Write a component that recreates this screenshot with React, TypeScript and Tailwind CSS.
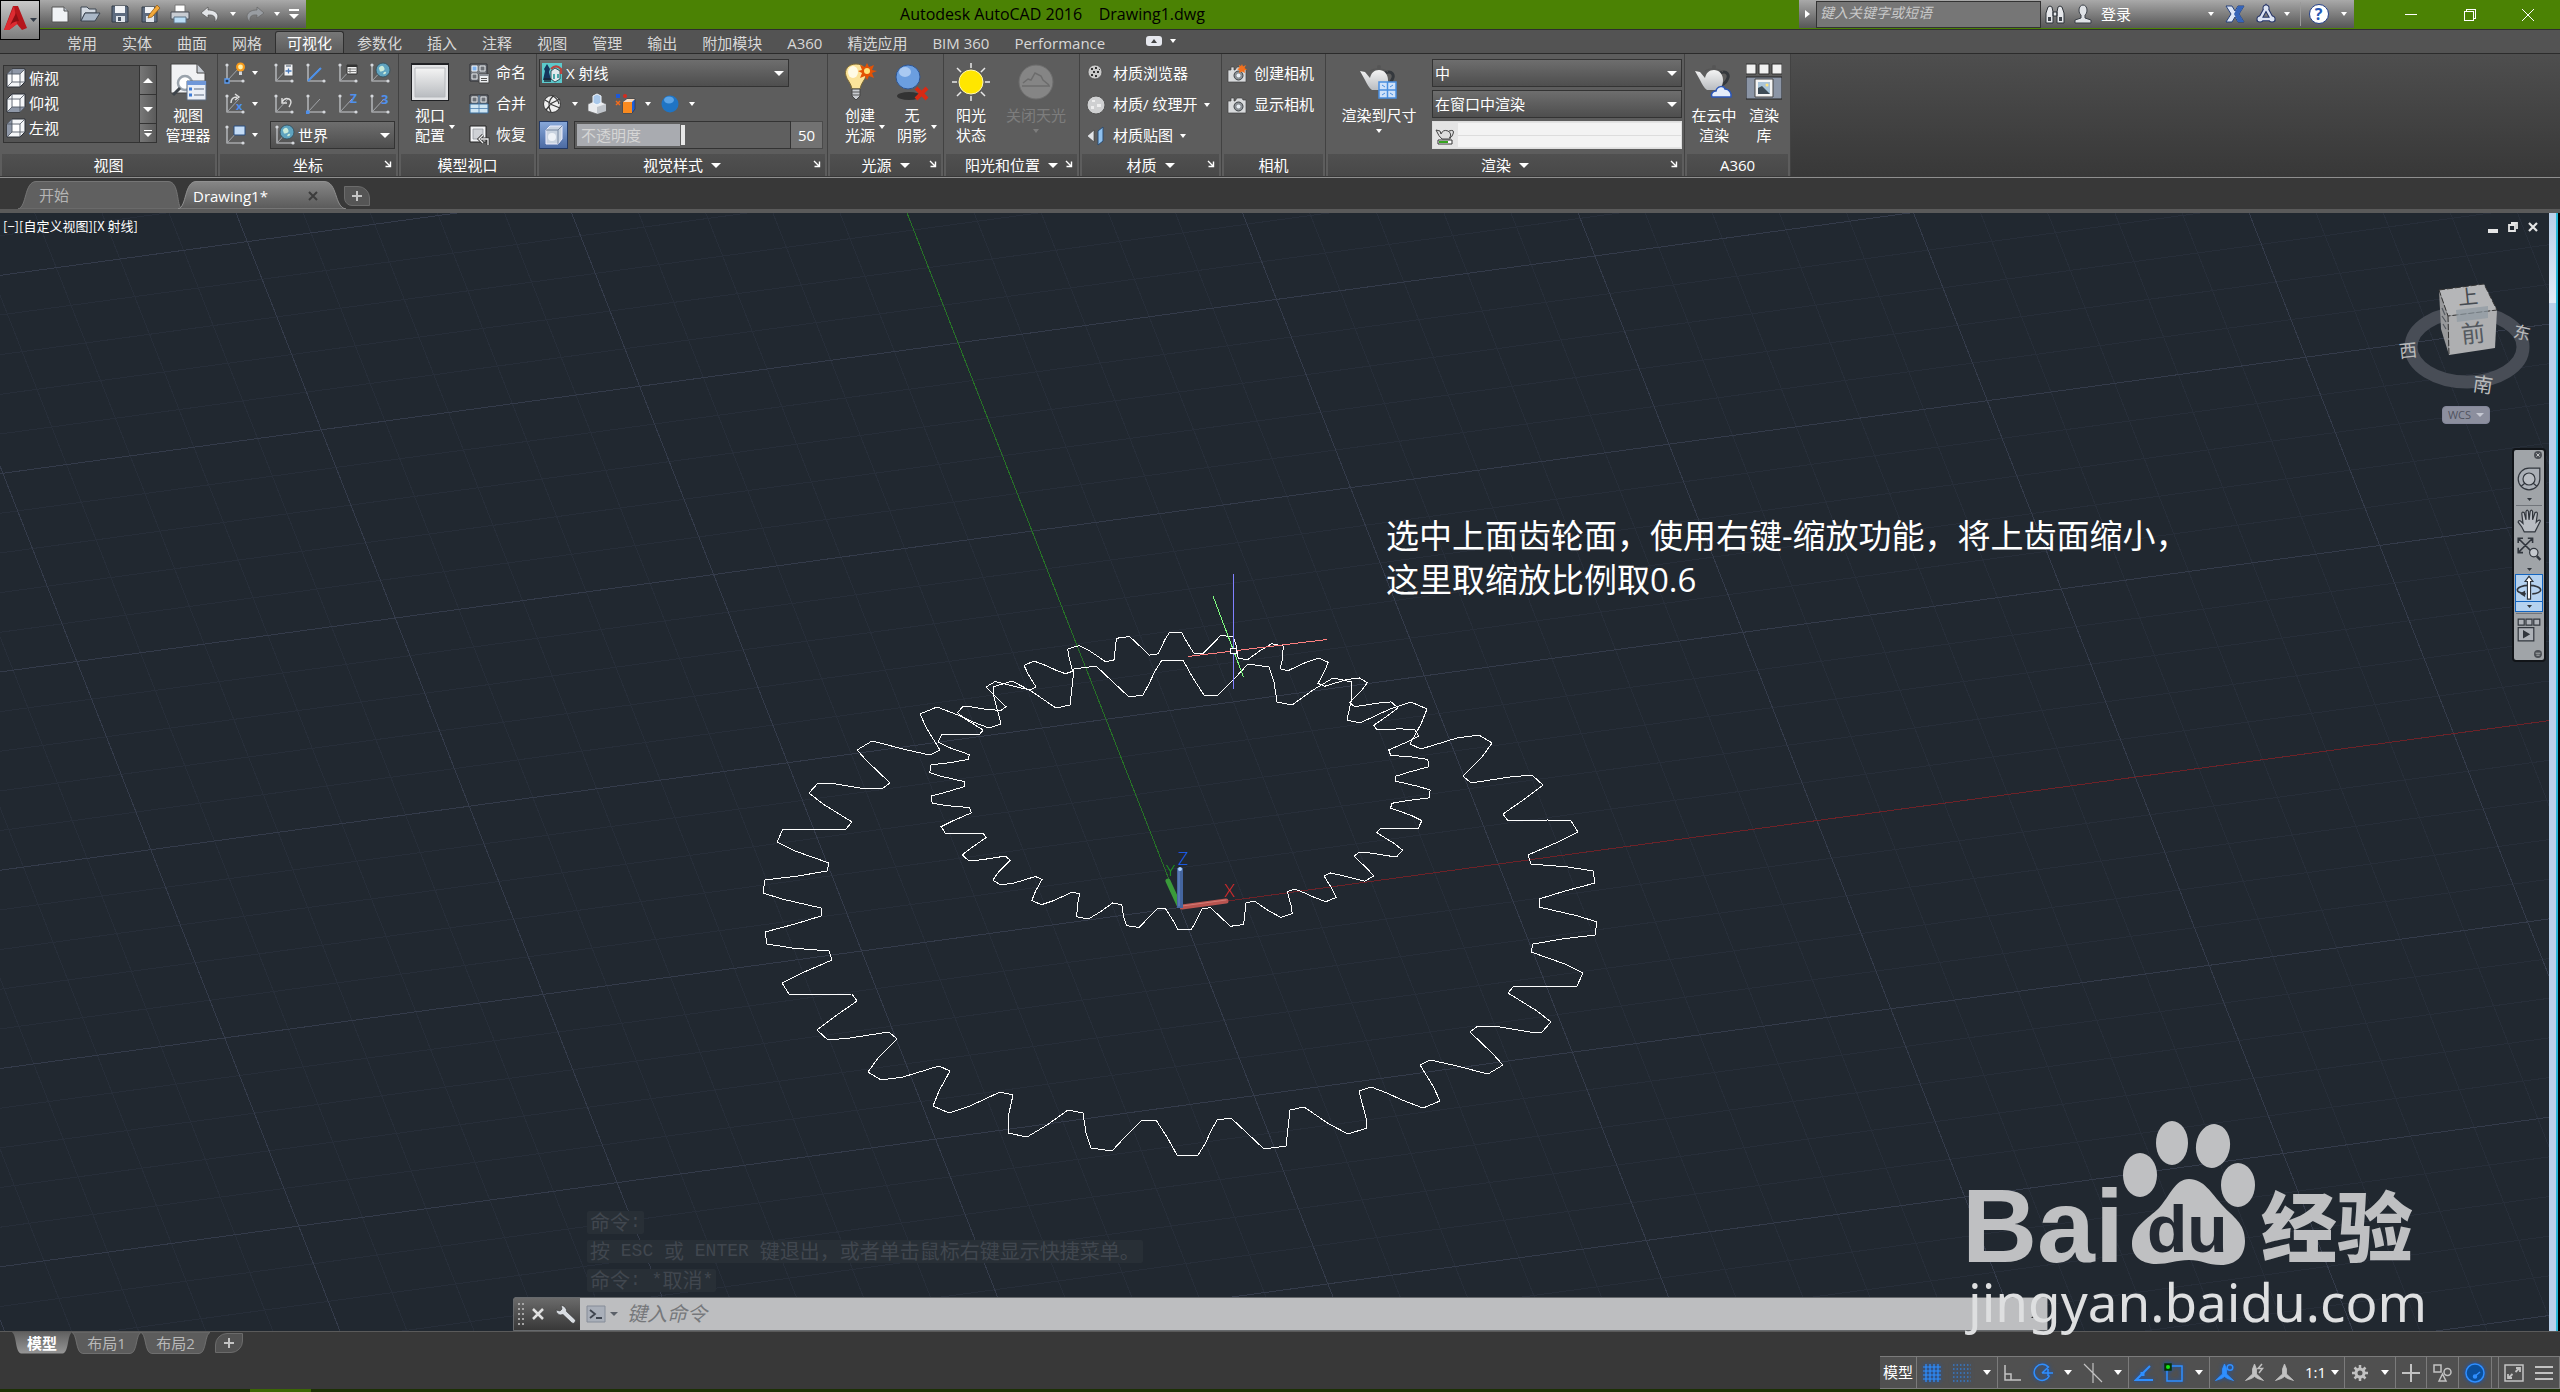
import { useState, type ReactNode } from 'react';
import { clsx } from 'clsx';

/* ---------- small building blocks ---------- */

function Icon({ children, className = 'h-5 w-5' }: { children: ReactNode; className?: string }) {
  return (
    <svg viewBox="0 0 20 20" className={clsx('shrink-0 overflow-visible', className)} aria-hidden="true">
      {children}
    </svg>
  );
}

function Caret({ className = 'h-1 w-2' }: { className?: string }) {
  return (
    <svg viewBox="0 0 8 4" preserveAspectRatio="none" className={clsx('shrink-0 fill-current', className)} aria-hidden="true">
      <path d="M0 0h8L4 4z" />
    </svg>
  );
}

function Launcher() {
  return (
    <button aria-label="more" className="absolute right-1 top-[6px] h-2 w-2 text-white">
      <svg viewBox="0 0 8 8" className="h-2 w-2" aria-hidden="true">
        <path d="M1 1l5 5M6.500 1.500v5h-5" fill="none" stroke="currentColor" strokeWidth="1.400" />
      </svg>
    </button>
  );
}

interface PanelProps {
  title: string;
  menu?: boolean;
  launcher?: boolean;
  className: string;
  children: ReactNode;
}

function Panel({ title, menu, launcher, className, children }: PanelProps) {
  return (
    <section className={clsx('flex shrink-0 flex-col border-r border-[#424242] bg-[#5d5d5d]', className)}>
      <div className="flex h-[100px]">{children}</div>
      <div className="relative mx-[2px] flex h-[22px] items-center justify-center gap-2 bg-linear-to-b from-[#505050] to-[#484848] leading-5">
        {title}
        {menu && <Caret className="h-[5px] w-[10px]" />}
        {launcher && <Launcher />}
      </div>
    </section>
  );
}

interface BigButtonProps {
  lines: string[];
  icon: ReactNode;
  arrow?: 'side' | 'below';
  disabled?: boolean;
  className?: string;
}

function BigButton({ lines, icon, arrow, disabled, className }: BigButtonProps) {
  return (
    <button
      disabled={disabled}
      className={clsx('flex shrink-0 flex-col items-center pt-2', disabled && 'text-[#7d7d7d]', className)}
    >
      <span className="flex h-10 items-center">{icon}</span>
      <span className="relative mt-[3px] block whitespace-nowrap text-center leading-5">
        {lines.map((l) => (
          <span key={l} className="block">{l}</span>
        ))}
        {arrow === 'side' && <Caret className="absolute left-full top-5 ml-1 h-1 w-[6px]" />}
      </span>
      {arrow === 'below' && <Caret className="mt-1 h-1 w-[6px]" />}
    </button>
  );
}

function Combo({ label, options, className, inner, children }: {
  label: string;
  options: string[];
  className: string;
  inner: string;
  children?: ReactNode;
}) {
  return (
    <div className={clsx('relative flex h-7 items-center border border-[#333] bg-linear-to-b from-[#6e6e6e] to-[#4e4e4e]', className)}>
      {children}
      <select aria-label={label} className={clsx('h-full w-full appearance-none bg-transparent text-white outline-none', inner)}>
        {options.map((o) => (
          <option key={o}>{o}</option>
        ))}
      </select>
      <Caret className="pointer-events-none absolute right-1 top-[11px] h-[5px] w-[10px]" />
    </div>
  );
}

/* ---------- icons ---------- */

const Cube = ({ face }: { face: 'top' | 'bottom' | 'left' }) => (
  <Icon>
    <path d="M1 6l5-5h13v13l-5 5H1z" fill="#f4f6f8" stroke="#2b2f36" />
    {face === 'top' && <path d="M1 6l5-5h13l-5 5z" fill="#8f98a8" />}
    {face === 'bottom' && <path d="M1 19l5-5h13l-5 5z" fill="#8f98a8" />}
    {face === 'left' && <path d="M1 6l5-5v13l-5 5z" fill="#8f98a8" />}
    <path d="M1 6h13v13M14 6l5-5M6 1v13h13M6 14l-5 5" fill="none" stroke="#4a505a" strokeWidth=".8" />
    <path d="M7 7h6v6H7z" fill="#fff" />
  </Icon>
);

const Axes = ({ children }: { children?: ReactNode }) => (
  <Icon>
    <path d="M2 2v16h16" fill="none" stroke="#c9ccd0" strokeWidth="1.200" />
    <path d="M2 18L14 5" fill="none" stroke="#a3a6aa" />
    <circle cx="2" cy="2" r="1.600" fill="#d5d8dc" />
    <circle cx="18" cy="18" r="1.600" fill="#d5d8dc" />
    {children}
  </Icon>
);

const Globe = ({ x, y, r }: { x: number; y: number; r: number }) => (
  <g>
    <circle cx={x} cy={y} r={r} fill="#5fa3bf" stroke="#2f4a58" strokeWidth=".8" />
    <path d={`M${x - r * 0.6} ${y - 2}q3-4 5-1t-1 4-3 0zM${x + 1} ${y + 2}q3-1 2 1t-3 1z`} fill="#c9ead9" />
  </g>
);

const Teapot = ({ children }: { children: ReactNode }) => (
  <svg viewBox="0 0 40 34" className="h-[34px] w-10" aria-hidden="true">
    <path d="M26 8c7-3 10 2 7 7-2 4-5 5-8 5" fill="none" stroke="#34383d" strokeWidth="3" />
    <path d="M1 6l5 1 5 6c1-5 4-8 9-8s9 4 9 10c0 5-2 9-5 10H13c-3-2-5-6-7-10z" fill="url(#metal)" />
    <path d="M11 6c4-3 14-3 18 1" fill="none" stroke="#555" />
    <circle cx="20" cy="2" r="2" fill="#555" />
    {children}
  </svg>
);

const Camera = ({ spark }: { spark?: boolean }) => (
  <Icon>
    <path d="M1 6h3V3h3v3h1l2-3h5l1 2h3v13H1z" fill="#d9dbdd" stroke="#444" strokeWidth=".7" />
    <circle cx="11.500" cy="11.500" r="4.500" fill="#8c9196" stroke="#3f4347" />
    <circle cx="11.500" cy="11.500" r="2" fill="#e8eef4" />
    {spark && <path d="M15 0l1 2.500L19 1l-1.500 3L20 5.500l-2.500 1L18 9l-3-1.500L12 9l.5-2.500L10 5l2.500-1L12 1l2 1z" fill="#f2701d" />}
  </Icon>
);

const viewportIcons = [
  <Icon key="a">
    <path d="M1 1h17v17H1z" fill="#767a80" stroke="#2e3136" />
    <path d="M3 3h5v5H3z" fill="#7fb2ee" stroke="#f1f3f5" />
    <path d="M11 3h5v5h-5zM3 11h5v5H3z" fill="#6b6f75" stroke="#e3e6e9" />
    <path d="M10 11h10v9H10z" fill="#eceef0" stroke="#444" />
    <path d="M10 11h10v2H10z" fill="#8b9097" />
    <path d="M12 15.500h6M12 17.500h6" stroke="#555" />
  </Icon>,
  <Icon key="b">
    <path d="M1 1h18v9H1z" fill="#767a80" stroke="#2e3136" />
    <path d="M3 3h5v5H3zM12 3h5v5h-5z" fill="#6b6f75" stroke="#e3e6e9" />
    <path d="M1 10h18v9H1z" fill="#cfe6f4" stroke="#3b6f9c" />
    <path d="M10 1v18M1 14.500h18" stroke="#4b7fae" strokeWidth=".8" />
  </Icon>,
  <Icon key="c">
    <path d="M1 1h16v16H1z" fill="#f3f4f6" stroke="#222" />
    <path d="M4 4h10v10H4z" fill="#cfd2d6" stroke="#8b8f95" strokeWidth=".7" />
    <path d="M19 20v-6h-7M14 10l-4 4 4 4" fill="none" stroke="#333" strokeWidth="3" />
    <path d="M19 20v-6h-7M14 10l-4 4 4 4" fill="none" stroke="#eee" strokeWidth="1.300" />
  </Icon>,
];

/* ---------- title bar ---------- */

const quickAccess: [string, ReactNode][] = [
  ['新建', <Icon key="i"><path d="M2 3h12l4 4v11H2z" fill="#f0f2f5" stroke="#555" /><path d="M14 3v4h4" fill="#bcc3cc" stroke="#555" /></Icon>],
  ['打开', <Icon key="i"><path d="M1 3h6l2 2h7v4H5L1 17z" fill="#d4dae2" stroke="#3d4652" /><path d="M5 9h15l-5 8H1z" fill="#aab7c7" stroke="#3d4652" /></Icon>],
  ['保存', <Icon key="i"><path d="M2 2h15l1 1v15H2z" fill="#5e6c80" stroke="#333c48" /><path d="M5 2h10v7H5z" fill="#f1f3f6" /><path d="M6 12h9v6H6z" fill="#dfe4ea" /><path d="M8 13h3v4H8z" fill="#4a5666" /></Icon>],
  ['另存为', <Icon key="i"><path d="M2 3h13l2 1v14H2z" fill="#5e6c80" stroke="#333c48" /><path d="M5 3h9v6H5z" fill="#f1f3f6" /><path d="M6 12h8v6H6z" fill="#dfe4ea" /><path d="M9 11L17 1l3 3-8 9-4 1z" fill="#f2a93b" stroke="#8a5512" strokeWidth=".7" /></Icon>],
  ['打印', <Icon key="i"><path d="M5 1h10v7H5z" fill="#fff" stroke="#777" /><path d="M1 8h18v7H1z" fill="#c8ccd2" stroke="#4a4f57" /><path d="M4 13h12v6H4z" fill="#b9dcf5" stroke="#5d7386" /></Icon>],
  ['放弃', <Icon key="i"><path d="M8 3L1 9l7 5v-3c5-.500 8 1 7 7 6-6 2-12-7-12z" fill="#e3e5e8" stroke="#555" strokeWidth=".7" /></Icon>],
];

function TitleBar() {
  return (
    <header className="relative flex h-[30px] shrink-0 border-b border-[#2e2e2e] bg-[#4b8204]">
      <button aria-label="应用程序菜单" className="absolute left-0 top-0 z-10 flex h-10 w-10 items-center border border-black bg-linear-to-b from-[#c9c9c9] to-[#7c7c7c]">
        <svg viewBox="0 0 38 38" className="h-[38px] w-[38px]" aria-hidden="true">
          <path d="M12 5h5l9 22-5 2-5-6-8 6H3z" fill="#b5161b" />
          <path d="M13 5l3 18-8 6H3z" fill="#dd2b31" />
          <path d="M15 12l3 8c-3 0-6 1-9 4z" fill="#8d0f14" />
          <path d="M29 17h7l-3.500 4z" fill="#333c48" />
        </svg>
      </button>
      <div className="flex h-[28px] w-[306px] shrink-0 items-center bg-linear-to-b from-[#a9a9a9] to-[#575757] pl-[45px] text-white">
        {quickAccess.map(([name, icon]) => (
          <button key={name} aria-label={name} className="flex w-[30px] justify-center">{icon}</button>
        ))}
        <button aria-label="放弃列表" className="flex w-[15px] justify-center"><Caret className="h-1 w-[6px]" /></button>
        <button aria-label="重做" className="flex w-[30px] justify-center">
          <Icon><path d="M12 3l7 6-7 5v-3C7 10.500 4 12 5 18-1 12 3 6 12 6z" fill="#999da2" stroke="#666" strokeWidth=".7" /></Icon>
        </button>
        <button aria-label="重做列表" className="flex w-[14px] justify-center"><Caret className="h-1 w-[6px]" /></button>
        <button aria-label="自定义快速访问工具栏" className="flex w-[20px] flex-col items-center gap-[3px]">
          <span className="h-[2px] w-[10px] bg-white" />
          <Caret className="h-[5px] w-[10px]" />
        </button>
      </div>
      <h1 className="flex-1 whitespace-pre text-center text-[16px] leading-7 text-black">{'Autodesk AutoCAD 2016    Drawing1.dwg'}</h1>
      <div className="flex h-[28px] shrink-0 items-center bg-linear-to-b from-[#a9a9a9] to-[#575757]">
        <button aria-label="展开" className="flex w-[17px] justify-center">
          <svg viewBox="0 0 5 8" className="h-2 w-[5px] fill-white" aria-hidden="true"><path d="M0 0l5 4-5 4z" /></svg>
        </button>
        <input
          aria-label="搜索"
          placeholder="键入关键字或短语"
          className="h-[27px] w-[225px] border border-[#333] bg-[#767676] px-[3px] pb-[3px] text-[14px] italic placeholder-[#c9c9c9] outline-none"
        />
        <button aria-label="搜索" className="flex w-7 justify-center">
          <Icon><path d="M3 3q2-2 4 0l1 5v11H1V9zM17 3q-2-2-4 0l-1 5v11h7V9zM8 8h4v4H8z" fill="#e6e8eb" stroke="#2f343a" /><path d="M3 13h3v4H3zM14 13h3v4h-3z" fill="#3f444b" /></Icon>
        </button>
        <button className="flex w-[149px] items-center gap-2 px-1">
          <Icon><path d="M6 6a4 5 0 118 0c0 3-1 4-2 5v3l6 2v3H2v-3l6-2v-3C7 10 6 9 6 6z" fill="#dfe2e6" stroke="#3a3f46" /></Icon>
          登录
          <Caret className="ml-auto h-1 w-[6px]" />
        </button>
        <button aria-label="Exchange" className="flex w-[34px] justify-center">
          <Icon><path d="M1 2h6l3 5 3-5h6l-5 8 5 8h-6l-3-5-3 5H1l5-8z" fill="#dce6f7" stroke="#28427c" /><path d="M13 2h6l-5 8 5 8h-6l-4-8z" fill="#3564b8" /></Icon>
        </button>
        <button aria-label="保持连接" className="mr-[6px] flex w-[42px] items-center justify-center gap-2">
          <Icon><path d="M10 4L4 15h12z" fill="none" stroke="#26366a" strokeWidth="4.500" /><circle cx="10" cy="4" r="3.500" fill="#26366a" /><circle cx="4" cy="15" r="3.500" fill="#26366a" /><circle cx="16" cy="15" r="3.500" fill="#26366a" /><path d="M10 4L4 15h12z" fill="none" stroke="#dde4f3" strokeWidth="2.400" /><circle cx="10" cy="4" r="2.500" fill="#dde4f3" /><circle cx="4" cy="15" r="2.500" fill="#dde4f3" /><circle cx="16" cy="15" r="2.500" fill="#dde4f3" /></Icon>
          <Caret className="h-1 w-[6px]" />
        </button>
        <button aria-label="帮助" className="flex h-6 w-[54px] items-center justify-center gap-3 border-l border-[#999]">
          <span className="flex h-5 w-5 items-center justify-center rounded-full border border-[#24418a] bg-white text-[16px] font-bold leading-4 text-[#2557b5]">?</span>
          <Caret className="h-1 w-[6px]" />
        </button>
      </div>
      <div className="flex shrink-0 pl-[27px] pr-[3px]">
        <button aria-label="最小化" className="flex w-[59px] items-center justify-center"><span className="h-px w-3 bg-white" /></button>
        <button aria-label="还原" className="flex w-[59px] items-center justify-center">
          <svg viewBox="0 0 12 12" className="h-3 w-3" shapeRendering="crispEdges" aria-hidden="true">
            <path d="M.5 2.500h9v9h-9zM2.500 2V.5h9v9H10" fill="none" stroke="#fff" />
          </svg>
        </button>
        <button aria-label="关闭" className="flex w-[58px] items-center justify-center">
          <svg viewBox="0 0 12 12" className="h-3 w-3" aria-hidden="true"><path d="M0 0l12 12M12 0L0 12" stroke="#fff" /></svg>
        </button>
      </div>
    </header>
  );
}

/* ---------- ribbon ---------- */

const ribbonTabs = ['常用', '实体', '曲面', '网格', '可视化', '参数化', '插入', '注释', '视图', '管理', '输出', '附加模块', 'A360', '精选应用', 'BIM 360', 'Performance'];

function RibbonTabs() {
  const [active, setActive] = useState('可视化');
  return (
    <nav className="flex h-6 shrink-0 items-end gap-px border-b border-[#2b2b2b] bg-[#535353] pl-[55px] text-[#d8d8d8]">
      {ribbonTabs.map((tab) => (
        <button
          key={tab}
          onClick={() => setActive(tab)}
          className={clsx(
            'h-[22px] whitespace-nowrap border-x border-t px-[11px] leading-[18px]',
            tab === active
              ? 'rounded-t-[3px] border-[#2f2f2f] bg-linear-to-b from-[#777] to-[#5d5d5d] text-white'
              : 'border-transparent',
          )}
        >
          {tab}
        </button>
      ))}
      <button aria-label="最小化功能区" className="ml-7 flex h-[22px] items-center gap-2 pb-[2px] text-white">
        <span className="flex h-[10px] w-4 items-center justify-center rounded-[3px] bg-[#e6e8ee] text-[#444]">
          <Caret className="h-1 w-[6px] rotate-180" />
        </span>
        <Caret className="h-1 w-[6px]" />
      </button>
    </nav>
  );
}

function MiniButton({ icon, text, arrow }: { icon: ReactNode; text?: string; arrow?: boolean }) {
  return (
    <button aria-label={text ?? 'tool'} className="flex h-[31px] items-center gap-[7px] whitespace-nowrap">
      {icon}
      {text}
      {arrow && <Caret className="h-1 w-[6px]" />}
    </button>
  );
}

function ViewPanel() {
  return (
    <Panel title="视图" className="w-[218px]">
      <div className="ml-[3px] mt-[11px] flex h-[78px] w-[154px] border border-[#333] bg-[#535353]">
        <div className="flex flex-1 flex-col">
          {([['俯视', 'top'], ['仰视', 'bottom'], ['左视', 'left']] as const).map(([name, face]) => (
            <button key={name} className="flex h-[25px] items-center gap-[3px] px-[2px] pb-[2px] leading-5">
              <Cube face={face} />
              {name}
            </button>
          ))}
        </div>
        <div className="flex w-[17px] flex-col divide-y divide-[#333] border-l border-[#333] bg-linear-to-r from-[#777] to-[#5b5b5b]">
          <button aria-label="上" className="flex flex-1 items-center justify-center"><Caret className="h-[5px] w-[10px] rotate-180" /></button>
          <button aria-label="下" className="flex flex-1 items-center justify-center"><Caret className="h-[5px] w-[10px]" /></button>
          <button aria-label="展开" className="flex h-[18px] flex-col items-center justify-center gap-[2px]">
            <span className="h-px w-2 bg-white" />
            <Caret className="h-1 w-2" />
          </button>
        </div>
      </div>
      <BigButton
        className="ml-1 w-[54px]"
        lines={['视图', '管理器']}
        icon={
          <svg viewBox="0 0 38 38" className="h-[38px] w-[38px]" aria-hidden="true">
            <path d="M2 1h26l8 9v20H2z" fill="#f1f2f4" stroke="#444" />
            <path d="M28 1v9h8" fill="#c6ccd4" stroke="#444" />
            <circle cx="16" cy="20" r="7" fill="#fff" stroke="#9aa3ac" strokeWidth="2.500" />
            <path d="M11 25l-7 7" stroke="#3e444b" strokeWidth="3" />
            <path d="M18 18h19v19H18z" fill="#e9eef6" stroke="#5a6a80" />
            <path d="M18 18h19v4H18z" fill="#6f97d8" />
            <path d="M20 26h3M20 32h3" stroke="#3d7bd6" strokeWidth="3" />
            <path d="M25 26h10M25 32h10" stroke="#8b97a8" strokeWidth="1.500" />
          </svg>
        }
      />
    </Panel>
  );
}

function CoordPanel() {
  const first = [
    <Axes key="1"><path d="M0 16h4v4H0z" fill="#26384f" stroke="#5b9cf2" strokeWidth="1.300" /><circle cx="15.500" cy="4" r="4.500" fill="#f79a1c" /><circle cx="15.500" cy="4" r="2.400" fill="#fff1a8" /><path d="M14 8.500h3v3.500h-3z" fill="#d3d6da" /></Axes>,
    <Axes key="2"><path d="M6 9q0-6 6-6M10 0l4 3-4 3" fill="none" stroke="#ddd" strokeWidth="1.500" /><text x="11" y="16" fontSize="11" fontWeight="700" fill="#4f90ec">x</text></Axes>,
    <Axes key="3"><path d="M9 1h11v9H9z" fill="#c4dcf6" stroke="#2b4f80" /></Axes>,
  ];
  const grid = [
    [
      <Axes key="1"><path d="M10 1h9v12h-9z" fill="#f0f1f3" stroke="#555" /><path d="M12 3h5" stroke="#456" /><path d="M11.500 8h6M14.500 5.500v5" stroke="#4778b8" strokeWidth="1.300" /></Axes>,
      <Axes key="2"><path d="M2 18L15 5" stroke="#4c91ea" strokeWidth="2" /></Axes>,
      <Axes key="3"><path d="M9 2h10v9H9z" fill="#f4f4f4" stroke="#333" /><path d="M9 3h10" stroke="#333" strokeWidth="2" /><path d="M10 6h8M10 8.500h8M12 5v5" stroke="#666" strokeWidth=".8" /></Axes>,
      <Axes key="4"><Globe x={13} y={7} r={7} /></Axes>,
    ],
    [
      <Axes key="1"><path d="M8 8q3-5 7-3t0 8M8 4v5h5" fill="none" stroke="#ddd" strokeWidth="1.400" /></Axes>,
      <Axes key="2"><path d="M0 16.500h3.500V20H0z" fill="#4f90ec" /></Axes>,
      <Axes key="3"><text x="12" y="9" fontSize="12" fontWeight="700" fill="#4f90ec">Z</text></Axes>,
      <Axes key="4"><text x="11" y="10" fontSize="13" fontWeight="700" fill="#4f90ec">3</text></Axes>,
    ],
  ];
  return (
    <Panel title="坐标" launcher className="w-[181px]">
      <div className="flex w-[52px] shrink-0 flex-col pl-[7px] pt-[3px]">
        {first.map((icon, i) => <MiniButton key={i} icon={icon} arrow />)}
      </div>
      <div className="flex flex-col pt-[3px]">
        {grid.map((row, i) => (
          <div key={i} className="flex gap-3 pl-1">
            {row.map((icon, j) => <MiniButton key={j} icon={icon} />)}
          </div>
        ))}
        <Combo label="坐标系" options={['世界']} className="mt-[2px] w-[125px]" inner="pl-[27px]">
          <span className="pointer-events-none absolute left-1"><Axes><Globe x={12} y={7} r={7} /></Axes></span>
        </Combo>
      </div>
    </Panel>
  );
}

function ModelViewportPanel() {
  return (
    <Panel title="模型视口" className="w-[138px]">
      <BigButton
        className="ml-[6px] w-[50px]"
        lines={['视口', '配置']}
        arrow="side"
        icon={
          <svg viewBox="0 0 38 38" className="h-[38px] w-[38px]" aria-hidden="true">
            <path d="M0 0h38v38H0z" fill="#202124" />
            <path d="M1 2h36v35H1z" fill="#e3e4e6" />
            <path d="M4 5h30v29H4z" fill="url(#metal)" stroke="#b7b9bd" />
          </svg>
        }
      />
      <div className="ml-[14px] flex flex-col pt-[3px]">
        {['命名', '合并', '恢复'].map((t, i) => <MiniButton key={t} icon={viewportIcons[i]} text={t} />)}
      </div>
    </Panel>
  );
}

function VisualStylePanel() {
  const [opacity, setOpacity] = useState(50);
  return (
    <Panel title="视觉样式" menu launcher className="w-[291px]">
      <div className="flex flex-col pl-[2px] pt-[5px]">
        <Combo label="视觉样式" options={['X 射线']} className="w-[250px]" inner="pl-[26px]">
          <span className="pointer-events-none absolute left-[2px] flex h-5 w-5 bg-[#5cc9cc]">
            <Icon>
              <path d="M1 17l2-9-1-2 3-5 3 5-1 3 2 8z" fill="#16345c" />
              <path d="M9 8l4-3 5 3v8l-5 3-4-3z" fill="#dfe9ec" stroke="#16343c" strokeWidth=".8" />
              <path d="M9 6q5-5 10 0v5" fill="none" stroke="#b8433f" strokeWidth="2.200" />
              <path d="M11 11h2v5h-2zM15 11h2v4h-2z" fill="#49a6a8" />
              <path d="M2 15h7v4H2z" fill="#1b2330" opacity=".7" />
            </Icon>
          </span>
        </Combo>
        <div className="flex h-[34px] items-center gap-[9px] pl-1">
          <Icon><circle cx="9" cy="10" r="8.500" fill="#efefef" stroke="#3a3a3a" /><path d="M10 2Q3 9 8 18M7 10l10-5M7 10l10 4M7 9L2 6M7 11l-4 5M10 2q5 3 6 8" fill="none" stroke="#3a3a3a" strokeWidth="1.300" /></Icon>
          <Caret className="h-1 w-[6px]" />
          <Icon><path d="M10 6l9 4v7l-9 3-9-3v-7z" fill="#e9ebee" stroke="#666" strokeWidth=".7" /><path d="M10 13v7l9-3v-7z" fill="#bfc4ca" /><path d="M6 2l4-2 4 2v7l-4 2-4-2z" fill="#a9c8ea" stroke="#f4f8fc" /></Icon>
          <Icon><path d="M7 8l4-3h8v10l-3 4H7z" fill="#1f5fd8" stroke="#333" strokeWidth=".7" /><path d="M7 8l4-3h8l-3 3z" fill="#f6d9bd" /><path d="M7 8h9v11H7z" fill="#f98a1f" /><path d="M0 0h4v4H0z" fill="#1c58d8" /><circle cx="9" cy="2" r="2" fill="#d52b1e" /><path d="M0 7l4 4M4 7l-4 4" stroke="#f26b1c" strokeWidth="1.500" /></Icon>
          <Caret className="h-1 w-[6px]" />
          <Icon><circle cx="10" cy="10" r="8.500" fill="#1f74c4" /><ellipse cx="9" cy="6" rx="5" ry="3.500" fill="#5aa3e6" /></Icon>
          <Caret className="h-1 w-[6px]" />
        </div>
        <div className="flex h-7 items-center">
          <button aria-label="X 射线" className="mr-[6px] flex h-7 w-[29px] items-center justify-center border border-[#233a66] bg-linear-to-b from-[#87a7d8] to-[#4c6ba3]">
            <Icon><path d="M2 5l4-4h12v13l-4 5H2z" fill="#c9d3e0" stroke="#eef" /><path d="M2 5h12v14M14 5l4-4" fill="none" stroke="#7787a0" /><circle cx="8" cy="12" r="4" fill="#eef2f7" /></Icon>
          </button>
          <div className="relative h-7 w-[217px] border border-[#333] bg-[#5f5f5f]">
            <div className="absolute inset-y-[2px] left-[2px] bg-[#a9abb0]" style={{ width: `${opacity - 2}%` }} />
            <label htmlFor="opacity" className="pointer-events-none absolute left-[6px] top-[3px] leading-5 text-[#d5d5d5]">不透明度</label>
            <input
              id="opacity"
              type="range"
              value={opacity}
              onChange={(e) => setOpacity(Number(e.target.value))}
              className="absolute inset-0 h-full w-full appearance-none bg-transparent [&::-webkit-slider-thumb]:h-5 [&::-webkit-slider-thumb]:w-1 [&::-webkit-slider-thumb]:appearance-none [&::-webkit-slider-thumb]:bg-[#e8e8e8]"
            />
          </div>
          <input aria-label="不透明度值" value={opacity} readOnly className="h-7 w-8 border border-l-0 border-[#4a4a4a] bg-[#727272] text-center outline-none" />
        </div>
      </div>
    </Panel>
  );
}

function LightPanel() {
  return (
    <Panel title="光源" menu launcher className="w-[116px]">
      <BigButton
        className="ml-[3px] w-[58px]"
        lines={['创建', '光源']}
        arrow="side"
        icon={
          <svg viewBox="0 0 38 38" className="h-[38px] w-[38px]" aria-hidden="true">
            <path d="M15 1C7 1 3 7 5 13c1 4 5 7 6 13h8c1-6 5-9 6-13 2-6-2-12-10-12z" fill="#fbe39a" stroke="#7d6a35" />
            <ellipse cx="12" cy="9" rx="5" ry="6" fill="#fffbe6" />
            <path d="M11 26h8v7l-4 4-4-4z" fill="#c8cbd0" stroke="#444" />
            <path d="M11 29h8M11 32h8" stroke="#555" />
            <path d="M26 0l2 4 5-2-2 5 5 1-5 2 2 5-5-2-2 4-2-4-5 2 2-5-4-2 4-1-2-5 5 2z" fill="#e35205" />
            <circle cx="26" cy="8" r="3" fill="#ffe27a" />
          </svg>
        }
      />
      <BigButton
        className="w-[46px]"
        lines={['无', '阴影']}
        arrow="side"
        icon={
          <svg viewBox="0 0 34 38" className="h-[38px] w-[34px]" aria-hidden="true">
            <ellipse cx="14" cy="33" rx="12" ry="4" fill="#333" />
            <circle cx="13" cy="14" r="12" fill="#6b9ee0" stroke="#2e5592" />
            <ellipse cx="10" cy="9" rx="6" ry="5" fill="#a9c9f2" />
            <path d="M21 25l11 11M32 25L21 36" stroke="#d92a14" strokeWidth="4" />
          </svg>
        }
      />
    </Panel>
  );
}

function SunPanel() {
  return (
    <Panel title="阳光和位置" menu launcher className="w-[136px]">
      <BigButton
        className="ml-[2px] w-[50px]"
        lines={['阳光', '状态']}
        icon={
          <svg viewBox="0 0 38 38" className="h-[38px] w-[38px]" aria-hidden="true">
            <path d="M19 0v38M0 19h38M5 5l28 28M33 5L5 33" stroke="#e8e8e8" strokeWidth="1.500" />
            <circle cx="19" cy="19" r="14" fill="#5d5d5d" />
            <circle cx="19" cy="19" r="12" fill="#ffe600" stroke="#fff7b5" />
          </svg>
        }
      />
      <BigButton
        className="ml-2 w-[64px]"
        lines={['关闭天光']}
        arrow="below"
        disabled
        icon={
          <svg viewBox="0 0 38 38" className="h-[38px] w-[38px]" aria-hidden="true">
            <circle cx="19" cy="19" r="17" fill="#858585" stroke="#6d6d6d" />
            <path d="M5 23h28M6 20l5-4 3 1 4-7 6 3 2 4 6 5" fill="none" stroke="#6c6c6c" strokeWidth="1.500" />
          </svg>
        }
      />
    </Panel>
  );
}

function MaterialPanel() {
  return (
    <Panel title="材质" menu launcher className="w-[142px]">
      <div className="flex flex-col pl-[6px] pt-1">
        <MiniButton text="材质浏览器" icon={<Icon><circle cx="9" cy="8" r="7" fill="#c9c9c9" stroke="#444" strokeWidth=".7" /><path d="M5 4h2v2H5zM9 3h2v2H9zM7 7h2v2H7zM11 7h2v2h-2zM5 10h2v2H5zM9 11h2v2H9zM13 5h1v1h-1z" fill="#333" /></Icon>} />
        <MiniButton text="材质/ 纹理开" arrow icon={<Icon><circle cx="10" cy="10" r="9" fill="#cfd0d1" stroke="#555" /><path d="M6 5h3v2H6zM11 9h4v3h-4zM5 11h3v3H5z" fill="#eee" /></Icon>} />
        <MiniButton text="材质贴图" arrow icon={<Icon><path d="M1 10l7-6v12z" fill="#e1e3e6" stroke="#444" strokeWidth=".7" /><path d="M12 5l5-4v14l-5 4z" fill="#8fc1ef" stroke="#2b4d73" /></Icon>} />
      </div>
    </Panel>
  );
}

function RenderPanel() {
  return (
    <Panel title="渲染" menu launcher className="w-[359px]">
      <BigButton
        className="w-[106px]"
        lines={['渲染到尺寸']}
        arrow="below"
        icon={
          <Teapot>
            <path d="M20 17h17v16H20z" fill="#cfe2fa" stroke="#4a8fe0" strokeWidth="1.500" />
            <path d="M28.500 17v16M20 25h17" stroke="#4a8fe0" strokeWidth="1.500" />
            <path d="M26 22l-3-2M31 22l3-2M26 28l-3 2M31 28l3 2" stroke="#4a8fe0" />
          </Teapot>
        }
      />
      <div className="flex w-[250px] flex-col gap-[3px] pt-[5px]">
        <Combo label="渲染预设" options={['中']} className="w-full" inner="pl-[2px]" />
        <Combo label="渲染位置" options={['在窗口中渲染']} className="w-full" inner="pl-[2px]" />
        <div className="flex h-7 items-center border border-[#ddd] bg-[#e4e4e4] pl-[2px]">
          <Icon><path d="M1 5l4 1 1 3q2-5 7-3 4 2 2 8H7Q4 12 1 5zM14 6q6-2 4 3t-4 3" fill="#ddd" stroke="#444" /><path d="M3 15h14v4H3z" fill="#fff" stroke="#333" /><path d="M4 16h9v2H4z" fill="#36a51f" /></Icon>
          <div className="ml-[3px] flex h-[24px] flex-1 flex-col divide-y divide-[#ddd] bg-[#f3f3f3]">
            <span className="flex-1" />
            <span className="flex-1" />
          </div>
        </div>
      </div>
    </Panel>
  );
}

function CloudPanel() {
  return (
    <Panel title="A360" className="w-[106px]">
      <BigButton
        className="w-[58px]"
        lines={['在云中', '渲染']}
        icon={
          <Teapot>
            <path d="M18 32c-2-4 2-6 4-6 1-5 8-6 9-2 4 0 7 4 6 8z" fill="#e6eefb" stroke="#2c57b8" strokeWidth="1.500" />
          </Teapot>
        }
      />
      <BigButton
        className="w-[42px]"
        lines={['渲染', '库']}
        icon={
          <svg viewBox="0 0 36 38" className="h-[38px] w-9" aria-hidden="true">
            <path d="M0 1h10v10H0zM13 1h10v10H13zM26 1h10v10H26z" fill="#f1f1f1" stroke="#333" />
            <path d="M0 14h36v22H0z" fill="#8b95a6" stroke="#222" />
            <path d="M9 16h18v18H9z" fill="#f4f4f4" stroke="#444" />
            <path d="M12 19h12v12H12z" fill="#a9c4d8" />
            <path d="M12 31v-6l4-2 8 8z" fill="#3e4c57" />
            <circle cx="21" cy="22" r="1.500" fill="#ffe37a" />
          </svg>
        }
      />
    </Panel>
  );
}

function Ribbon() {
  return (
    <div className="flex h-[124px] shrink-0 border-b border-[#8f8f8f] bg-linear-to-b from-[#4e4e4e] to-[#383838]">
      <div className="flex h-[122px]">
        <ViewPanel />
        <CoordPanel />
        <ModelViewportPanel />
        <VisualStylePanel />
        <LightPanel />
        <SunPanel />
        <MaterialPanel />
        <Panel title="相机" className="w-[104px]">
          <div className="flex flex-col pl-[5px] pt-1">
            <MiniButton text="创建相机" icon={<Camera spark />} />
            <MiniButton text="显示相机" icon={<Camera />} />
          </div>
        </Panel>
        <RenderPanel />
        <CloudPanel />
      </div>
    </div>
  );
}

/* ---------- file tabs ---------- */

function FileTabs() {
  return (
    <div className="flex h-[35px] shrink-0 items-end border-b-4 border-[#5a5a5a] bg-[#383838] pl-[18px]">
      <button className="relative h-7 w-[164px] pl-[21px] text-left text-[#b5b5b5]">
        <svg viewBox="0 0 164 28" preserveAspectRatio="none" className="absolute inset-0 h-full w-full" aria-hidden="true">
          <path d="M0 28C9 26 6 1 18 .5H150c12 0 8 25 14 27.500z" fill="#606060" stroke="#757575" />
        </svg>
        <span className="relative leading-7">开始</span>
      </button>
      <div className="relative flex h-7 w-[160px] items-center pl-[11px]">
        <svg viewBox="0 0 168 28" preserveAspectRatio="none" className="absolute inset-y-0 -left-1 h-full w-[168px]" aria-hidden="true">
          <path d="M0 28C9 26 6 1 18 .5H146c14 0 10 26 22 27.500z" fill="url(#tab)" stroke="#909090" />
        </svg>
        <button className="relative pt-[2px] leading-6">Drawing1*</button>
        <button aria-label="关闭 Drawing1" className="relative ml-auto mr-6 pt-[2px] text-[#3c3c3c]">
          <svg viewBox="0 0 10 10" className="h-[10px] w-[10px]" aria-hidden="true"><path d="M1 1l8 8M9 1L1 9" stroke="currentColor" strokeWidth="2" /></svg>
        </button>
      </div>
      <button aria-label="新图形" className="mb-[3px] ml-[2px] flex h-5 w-[26px] items-center justify-center rounded-bl-lg rounded-tr-xl border border-[#6b6b6b] bg-[#555] text-[#c4c4c4]">
        <svg viewBox="0 0 10 10" className="h-[10px] w-[10px]" aria-hidden="true"><path d="M5 0v10M0 5h10" stroke="currentColor" strokeWidth="2" /></svg>
      </button>
    </div>
  );
}

/* ---------- drawing ---------- */

const ORIGIN = { x: 1180, y: 907.5 };

// Half of the 30-tooth outline, the other half mirrors it through the origin
const halfGear: [number, number][] = [
  [1183, 660], [1162, 660], [1155, 671], [1149, 684], [1143, 695], [1129, 697], [1113, 682],
  [1096, 666], [1074, 669], [1072, 687], [1070, 705], [1056, 708], [1031, 691],
  [1012, 681], [993, 687], [994, 697], [1001, 724], [989, 728], [973, 722], [958, 715],
  [937, 707], [920, 714], [927, 729], [940, 750], [930, 755], [907, 750],
  [872, 741], [857, 750], [867, 761], [890, 783], [882, 789], [860, 788],
  [830, 783], [818, 783], [809, 793], [823, 804], [852, 822], [846, 829],
  [783, 829], [777, 842], [795, 851], [829, 863], [827, 871], [798, 876],
  [765, 880], [763, 893], [782, 899], [821, 908], [821, 916], [795, 924],
  [765, 932], [767, 944], [792, 948], [829, 951], [832, 960], [802, 973],
  [782, 983], [789, 994], [812, 995], [852, 994], [857, 1001], [834, 1017],
  [817, 1030], [828, 1040], [850, 1038], [889, 1032], [897, 1039], [878, 1058],
  [868, 1072], [881, 1080], [903, 1077], [939, 1066], [950, 1071], [939, 1091],
  [933, 1106], [949, 1113], [970, 1106], [1000, 1092], [1013, 1095], [1009, 1113],
  [1008, 1133], [1027, 1137], [1047, 1125], [1068, 1110], [1083, 1113], [1086, 1133],
  [1091, 1148], [1112, 1151], [1125, 1137], [1142, 1120], [1156, 1120], [1167, 1137],
];

const gear = [...halfGear, ...halfGear.map(([x, y]) => [2 * ORIGIN.x - x, 2 * ORIGIN.y - y])];

const outline = (scale: number, cy: number) =>
  gear.map(([x, y]) => `${ORIGIN.x + (x - ORIGIN.x) * scale},${cy + (y - ORIGIN.y) * scale}`).join(' ');

const TOP = 213;
const BOTTOM = 1331;
const RIGHT = 2549;

function gridPath(major: boolean) {
  let d = '';
  for (let i = -30; i <= 30; i++) {
    if ((i % 5 === 0) !== major) continue;
    const x = ORIGIN.x + i * 67.1;
    d += `M${x + (TOP - ORIGIN.y) * 0.393} ${TOP}L${x + (BOTTOM - ORIGIN.y) * 0.393} ${BOTTOM}`;
    const y = ORIGIN.y + i * 39.66;
    d += `M0 ${y + ORIGIN.x * 0.1365}L${RIGHT} ${y - (RIGHT - ORIGIN.x) * 0.1365}`;
  }
  return d;
}

function Drawing() {
  return (
    <svg viewBox="0 213 2549 1118" className="absolute inset-0 h-full w-full" shapeRendering="crispEdges" role="img" aria-label="Drawing1">
      <path d={gridPath(false)} stroke="#272e39" fill="none" />
      <path d={gridPath(true)} stroke="#343b4a" fill="none" />
      <path d="M1180 907.500L907 213" stroke="#267326" />
      <path d="M1180 907.500L2549 720.600" stroke="#6e2228" />
      <polygon points={outline(1, ORIGIN.y)} fill="none" stroke="#fff" />
      <polygon points={outline(0.6, 781.4)} fill="none" stroke="#fff" />
      <g shapeRendering="auto" strokeLinecap="round">
        <path d="M1168 881l11 24" stroke="#3a9a3a" strokeWidth="5" />
        <path d="M1182 907l44-6" stroke="#b95450" strokeWidth="5" />
        <path d="M1182 906l44-6" stroke="#d27a74" strokeWidth="1" />
        <path d="M1180 868v40" stroke="#44659f" strokeWidth="6" strokeLinecap="butt" />
        <path d="M1179 870v36" stroke="#6c8cc4" strokeWidth="1" />
        <circle cx="1180" cy="869" r="2" fill="#a9cfff" />
        <text x="1178" y="865" fontSize="17" fontFamily="Lato" fontWeight="300" fill="#1a62ff">Z</text>
        <text x="1166" y="876" fontSize="15" fontFamily="Lato" fontWeight="300" fill="#18b518">Y</text>
        <text x="1224" y="897" fontSize="17" fontFamily="Lato" fontWeight="300" fill="#f02a2a">X</text>
      </g>
      <path d="M1233.500 574v115" stroke="#8080ff" />
      <path d="M1213 596l30.500 81" stroke="#80ff80" />
      <path d="M1188 656.500l139-17" stroke="#ff8080" />
      <path d="M1230.500 648.500h6v5h-6z" fill="#212830" stroke="#fff" />
    </svg>
  );
}

function ViewCube() {
  return (
    <div className="absolute right-[8px] top-[62px] flex w-[150px] flex-col items-center">
      <svg viewBox="2390 275 150 125" className="h-[125px] w-[150px]" fontFamily="'Noto Sans CJK SC', sans-serif" textAnchor="middle" aria-label="ViewCube">
        <ellipse cx="2466" cy="347" rx="56" ry="35" fill="none" stroke="#484d56" strokeWidth="13" />
        <path d="M2438 290l45-6 13 26-49 6z" fill="#b5b6b8" />
        <path d="M2447 316l49-6-2 38-46 7z" fill="#aeafb1" />
        <path d="M2438 290l9 26 1 39-8-26z" fill="#98999b" />
        <path d="M2438 290l9 26 49-6M2447 316l1 39M2438 290l45-6 13 26" fill="none" stroke="#333" strokeDasharray="6 2" />
        <path d="M2441 308l3 7M2441 316l4 6M2442 324l3 5" stroke="#555a60" strokeWidth="1.200" />
        <path d="M2455 310l32-4v12l-31 4z" fill="#8f9aa3" opacity=".7" />
        <text x="2467" y="304" fontSize="20" fill="#454a50" transform="rotate(-6 2467 298)">上</text>
        <text x="2472" y="342" fontSize="24" fill="#555a60" transform="rotate(-6 2472 333)">前</text>
        <text x="2407" y="357" fontSize="18" fill="#b9babb" transform="rotate(-6 2407 350)">西</text>
        <text x="2521" y="339" fontSize="17" fill="#b9babb" transform="rotate(12 2521 333)">东</text>
        <text x="2482" y="392" fontSize="20" fill="#b9babb" transform="rotate(8 2482 385)">南</text>
      </svg>
      <button className="mt-[6px] flex h-[18px] w-12 items-center justify-center gap-[5px] rounded-[4px] border border-[#84879a] bg-[#8c8f9e] text-[11px] text-[#50535e]">
        WCS
        <Caret className="h-1 w-2 text-[#c5c8d2]" />
      </button>
    </div>
  );
}

function NavBar() {
  const arrow = 'flex h-[10px] items-center justify-center mt-[3px]';
  return (
    <div className="absolute right-[3px] top-[235px] flex h-[214px] w-[34px] flex-col rounded-[4px] border-2 border-[#111418] bg-[#a0a4a8] text-[#31363d]">
      <button aria-label="关闭导航栏" className="ml-auto mr-[2px] mt-px flex h-2 w-2 rounded-full bg-[#4c5056] text-[#c4c6c8]">
        <Icon className="h-2 w-2"><path d="M6 6l8 8M14 6l-8 8" stroke="currentColor" strokeWidth="2.500" /></Icon>
      </button>
      <button aria-label="全导航控制盘" className="mt-2 flex justify-center">
        <Icon className="h-6 w-6"><path d="M10 1h9v9a9 9 0 11-9-9z" fill="#aaafb6" stroke="currentColor" /><circle cx="10" cy="10" r="5" fill="#b9bdc3" stroke="currentColor" /><path d="M3.500 16l3-2.500M16.500 16l-3-2.500" stroke="currentColor" /></Icon>
      </button>
      <button aria-label="控制盘菜单" className={arrow}><Caret className="h-[3px] w-[5px]" /></button>
      <div className="mx-[2px] mt-px h-px bg-[#70747a]" />
      <button aria-label="平移" className="mt-[3px] flex justify-center">
        <Icon className="h-6 w-6"><path d="M6 19l-2-4-3-4q0-2 2-1l2 2-1-8q0-2 2-1l1.500 6L7.500 2q1-2 2 0l.5 7 1-7q1-2 2 0v7l2-6q2-1 2 1l-1 7q3-3 3.500-1L15 19z" fill="#b9bdc3" stroke="currentColor" /></Icon>
      </button>
      <button aria-label="范围缩放" className="mt-1 flex justify-center">
        <Icon className="h-6 w-6"><path d="M1 1l12 12M13 1L1 13M1 5V1h4M9 1h4v4M1 9v4h4" fill="none" stroke="currentColor" strokeWidth="1.300" /><circle cx="14" cy="13" r="3.500" fill="#c5c9ce" stroke="currentColor" /><path d="M16.500 16l3 3" stroke="currentColor" strokeWidth="2" /></Icon>
      </button>
      <button aria-label="缩放菜单" className={arrow}><Caret className="h-[3px] w-[5px]" /></button>
      <div className="mx-px border border-[#1365c0] bg-[#b5d2f0]">
        <button aria-label="动态观察" className="flex w-full justify-center border-b border-[#1365c0]">
          <Icon className="h-[26px] w-[26px]"><path d="M7.500 14.500C3 14 1 12.500 1 11.500 1 9.500 5 8 10 8s9 1.500 9 3.500c0 1.500-3 3-6.500 3" fill="none" stroke="currentColor" strokeWidth="1.200" /><path d="M8.800 18.500V5H7L10 1l3 4h-1.800v13.500z" fill="#fff" stroke="currentColor" strokeWidth=".9" /><path d="M3 14.500l4-2.500v5z" fill="currentColor" /></Icon>
        </button>
        <button aria-label="动态观察菜单" className="flex h-[9px] w-full items-center justify-center"><Caret className="h-[3px] w-[5px]" /></button>
      </div>
      <div className="mx-[2px] mt-px h-px bg-[#70747a]" />
      <button aria-label="ShowMotion" className="mt-1 flex justify-center">
        <Icon className="h-6 w-6"><path d="M1 1h5v5H1zM7.500 1h5v5h-5zM14 1h5v5h-5zM1 8h13v11H1z" fill="#aeb2b8" stroke="currentColor" /><path d="M5 10l6 3.500L5 17z" fill="currentColor" /></Icon>
      </button>
      <button aria-label="自定义" className="mb-[2px] ml-auto mr-[2px] mt-auto flex h-2 w-2 rounded-full bg-[#4c5056] text-[#c4c6c8]">
        <Icon className="h-2 w-2"><path d="M4 8h12M6 13h8" stroke="currentColor" strokeWidth="2" /></Icon>
      </button>
    </div>
  );
}

const Mono = ({ children }: { children: string }) => (
  <span className="whitespace-pre font-['Liberation_Mono',monospace] text-[18px]">{children}</span>
);

function CommandLine() {
  const row = 'flex h-[23px] items-center whitespace-nowrap rounded-[2px] bg-[#282f36] px-[3px]';
  return (
    <div className="absolute bottom-0 left-[513px] right-[501px] flex flex-col">
      <div className="flex flex-col items-start gap-[6px] pb-[5px] pl-[74px] text-[20px] text-[#41474f]">
        <p className={row}>命令<Mono>:</Mono></p>
        <p className={row}>按<Mono> ESC </Mono>或<Mono> ENTER </Mono>键退出，或者单击鼠标右键显示快捷菜单。</p>
        <p className={row}>命令<Mono>: *</Mono>取消<Mono>*</Mono></p>
      </div>
      <div className="flex h-[34px] rounded-tl-[3px] border border-[#66696c] bg-[#bdbec0]">
        <div className="flex w-[66px] items-center gap-2 bg-linear-to-b from-[#6b6b6b] to-[#383838] px-1 text-[#e0e0e0]">
          <svg viewBox="0 0 6 22" className="h-[22px] w-[6px] fill-[#a5a5a5]" aria-hidden="true">
            <path d="M0 0h2v2H0zM4 0h2v2H4zM0 5h2v2H0zM4 5h2v2H4zM0 10h2v2H0zM4 10h2v2H4zM0 15h2v2H0zM4 15h2v2H4zM0 20h2v2H0zM4 20h2v2H4z" />
          </svg>
          <button aria-label="关闭命令行">
            <svg viewBox="0 0 12 12" className="h-3 w-3" aria-hidden="true"><path d="M1 1l10 10M11 1L1 11" stroke="currentColor" strokeWidth="2.500" /></svg>
          </button>
          <button aria-label="自定义命令行" className="ml-1">
            <Icon><path d="M5 1l1 4-2 2-4-1q0 4 4 5l3-.5L16 19q2 1 3-1t0-2.500L10.500 7.500Q11 3 5 1z" fill="#d9dde2" stroke="#333" strokeWidth=".6" /></Icon>
          </button>
        </div>
        <button aria-label="最近使用的命令" className="flex w-[42px] items-center gap-1 pl-[6px] text-[#5b6068]">
          <svg viewBox="0 0 20 18" className="h-[18px] w-5" aria-hidden="true">
            <path d="M1 1h18v16H1z" fill="#a9afb9" stroke="#858c98" />
            <path d="M4 5l5 4-5 4M10 13h6" fill="none" stroke="#3e444e" strokeWidth="1.800" />
          </svg>
          <Caret className="h-1 w-2" />
        </button>
        <input aria-label="命令" placeholder="键入命令" className="flex-1 bg-transparent px-[5px] text-[20px] italic leading-8 text-[#333] placeholder-[#76787b] outline-none" />
        <Caret className="mr-2 mt-4 h-1 w-2 rotate-180 text-[#333]" />
      </div>
    </div>
  );
}

function Watermark() {
  return (
    <svg viewBox="1960 1115 470 225" className="pointer-events-none absolute -bottom-[9px] right-[119px] z-10 h-[225px] w-[470px]" aria-label="Baidu 经验">
      <g fill="#bfc0c2">
        <text x="1962" y="1262" fontSize="104" fontWeight="700" fontFamily="'Liberation Sans', sans-serif">Bai</text>
        <text x="2261" y="1256" fontSize="76" fontWeight="900" fontFamily="'Noto Sans CJK SC', sans-serif">经验</text>
        <ellipse cx="2140" cy="1175" rx="17" ry="22" />
        <ellipse cx="2172" cy="1143" rx="16" ry="22" />
        <ellipse cx="2213" cy="1146" rx="17" ry="22" transform="rotate(8 2213 1146)" />
        <ellipse cx="2238" cy="1185" rx="17" ry="22" />
        <path d="M2189 1179c-14 0-19 17-30 29-11 11-27 18-27 36 0 14 12 20 24 20 13 0 20-4 33-4s18 5 32 5c15 0 24-9 24-24 0-18-12-24-22-35-12-13-19-27-34-27z" />
      </g>
      <text x="2147" y="1252" fontSize="66" fontWeight="700" fontFamily="'Liberation Sans', sans-serif" fill="#242a33">du</text>
      <text x="1968" y="1322" fontSize="53" fontFamily="'Noto Sans', sans-serif" fill="#dedfe0">jingyan.baidu.com</text>
    </svg>
  );
}

function Viewport() {
  return (
    <main className="relative flex min-h-0 flex-1 bg-[#212830]">
      <div className="relative flex-1">
        <Drawing />
        <p className="absolute left-[3px] top-[3px] font-['Noto_Sans_CJK_SC',sans-serif] text-[13px] leading-5">[−][自定义视图][X 射线]</p>
        <div className="absolute right-[11px] top-2 flex items-center gap-[10px] text-[#e6e6e6]">
          <button aria-label="最小化视口" className="mt-2 h-1 w-[10px] bg-current" />
          <button aria-label="还原视口">
            <svg viewBox="0 0 10 10" className="h-[10px] w-[10px]" aria-hidden="true"><path d="M1 3h6v6H1zM3 1h6v6" fill="none" stroke="currentColor" strokeWidth="1.800" /></svg>
          </button>
          <button aria-label="关闭视口">
            <svg viewBox="0 0 10 10" className="h-[10px] w-[10px]" aria-hidden="true"><path d="M1 1l8 8M9 1L1 9" stroke="currentColor" strokeWidth="2.200" /></svg>
          </button>
        </div>
        <p className="absolute left-[1386px] top-[301px] whitespace-nowrap text-[33px] leading-[44px]">
          选中上面齿轮面，使用右键-缩放功能，将上齿面缩小，
          <br />
          这里取缩放比例取0.6
        </p>
        <ViewCube />
        <NavBar />
        <CommandLine />
        <Watermark />
      </div>
      <div className="flex w-[11px] flex-col border-r-2 border-black bg-[#b9d0ea]">
        <div className="h-[90px] border-r-2 border-[#27b7d6] bg-linear-to-b from-[#b9d0ea] to-[#e2ebf6]" />
        <div className="flex-1 border-r-2 border-[#27b7d6]" />
      </div>
    </main>
  );
}

/* ---------- bottom bars ---------- */

function LayoutTabs() {
  return (
    <div className="flex h-6 items-start pl-3">
      {['模型', '布局1', '布局2'].map((name, i) => (
        <button key={name} className={clsx('relative h-[22px]', i === 0 ? 'w-[60px] font-bold text-white' : 'w-[69px] text-[#b9b9b9]')}>
          <svg viewBox="0 0 70 22" preserveAspectRatio="none" className="absolute inset-0 h-full w-full" aria-hidden="true">
            <path d="M-1 0C6 1 3 21 11 21.500H59C67 21 64 1 71 0z" fill={i === 0 ? 'url(#layoutTab)' : '#5c5c5c'} stroke={i === 0 ? 'none' : '#707070'} />
          </svg>
          <span className="relative leading-5">{name}</span>
        </button>
      ))}
      <button aria-label="新建布局" className="ml-[5px] mt-px flex h-5 w-7 items-center justify-center rounded-br-xl rounded-tl-xl border border-[#6b6b6b] bg-[#525252] text-[#c4c4c4]">
        <svg viewBox="0 0 10 10" className="h-[10px] w-[10px]" aria-hidden="true"><path d="M5 0v10M0 5h10" stroke="currentColor" strokeWidth="2" /></svg>
      </button>
    </div>
  );
}

function StatusIcon({ name, on, children }: { name: string; on?: boolean; children: ReactNode }) {
  return (
    <button aria-label={name} className={clsx('flex w-[30px] justify-center', on ? 'text-[#2f8fff] drop-shadow-[0_0_2px_#0a55c8]' : 'text-[#c2c2c2]')}>
      <svg viewBox="0 0 20 20" className="h-5 w-5" fill="none" stroke="currentColor" strokeWidth="1.500" aria-hidden="true">{children}</svg>
    </button>
  );
}

const StatusCaret = () => (
  <button aria-label="菜单" className="flex w-5 justify-center text-white"><Caret className="h-[5px] w-2" /></button>
);

const Person = () => <path d="M9.500 1l2 5v5l7 6.500-6-2-3-2-3 2-6 2 7-6.500V6z" fill="currentColor" strokeWidth=".8" />;

function StatusBar() {
  const cell = 'flex h-[33px] items-center justify-center border border-l-0 border-[#7b7b7b] bg-[#505050]';
  return (
    <div className="flex h-[33px] justify-end">
      <button className={clsx(cell, 'w-[37px] border-l')}>模型</button>
      <div className={cell}>
        <StatusIcon name="栅格" on><path d="M4 1v18M8 1v18M12 1v18M16 1v18M1 4h18M1 8h18M1 12h18M1 16h18" strokeWidth="1.200" /></StatusIcon>
        <StatusIcon name="捕捉" on><path d="M1 2h18M1 6h18M1 10h18M1 14h18M1 18h18" strokeDasharray="1.500 2" strokeWidth="1.200" /></StatusIcon>
        <StatusCaret />
      </div>
      <div className={cell}>
        <StatusIcon name="正交"><path d="M2 2v15h16M2 11h6v6" /></StatusIcon>
        <StatusIcon name="极轴" on><path d="M15.500 4.500a8 8 0 101 8M9 10h11M9 10l7-6.500M15 6v7" /></StatusIcon>
        <StatusCaret />
        <StatusIcon name="等轴测"><path d="M10 0v20M1 1l18 18" strokeWidth="1.200" /></StatusIcon>
        <StatusCaret />
      </div>
      <div className={cell}>
        <StatusIcon name="对象捕捉追踪" on><path d="M16 3L2 17h17" strokeWidth="2" /><path d="M6.500 9h4v4h-4z" fill="currentColor" stroke="none" /></StatusIcon>
        <StatusIcon name="对象捕捉" on><path d="M3 3h15v15H3z" /><path d="M1 1h6v6H1z" fill="#0b3d0b" stroke="#063006" /><circle cx="4" cy="4" r="2" fill="#13e813" stroke="none" /></StatusIcon>
        <StatusCaret />
      </div>
      <div className={cell}>
        <StatusIcon name="注释可见性" on><Person /><circle cx="15" cy="4.500" r="2.800" /></StatusIcon>
        <StatusIcon name="自动缩放"><Person /><path d="M17 1l-4 4.500h4.500L14 10" /></StatusIcon>
        <StatusIcon name="注释比例"><Person /></StatusIcon>
        <button className="flex w-11 items-center justify-center gap-[5px]">
          1:1
          <Caret className="h-[5px] w-2" />
        </button>
      </div>
      <div className={cell}>
        <StatusIcon name="切换工作空间">
          <circle cx="10" cy="10" r="4" strokeWidth="3" />
          <path d="M10 2v3M10 15v3M2 10h3M15 10h3M4.500 4.500l2 2M13.500 13.500l2 2M15.500 4.500l-2 2M6.500 13.500l-2 2" strokeWidth="2.500" />
        </StatusIcon>
        <StatusCaret />
      </div>
      <div className={cell}><StatusIcon name="注释监视器"><path d="M10 1v18M1 10h18" strokeWidth="2" /></StatusIcon></div>
      <div className={clsx(cell, 'w-8')}>
        <StatusIcon name="隔离对象"><path d="M1 2h7v7H1zM6 18l3.500-7 3.500 7z" /><circle cx="14.500" cy="9" r="3.500" /></StatusIcon>
      </div>
      <div className={clsx(cell, 'w-[33px]')}>
        <StatusIcon name="硬件加速" on><circle cx="10" cy="10" r="9" fill="#0a4f9c" /><path d="M9 14l6-5" /><circle cx="10" cy="13.500" r="1.500" fill="currentColor" /></StatusIcon>
      </div>
      <div className={clsx(cell, 'w-[7px]')} />
      <div className={cell}>
        <StatusIcon name="全屏显示"><path d="M1 2h18v16H1z" /><path d="M11.500 9l4-4M12 5h4v4M8.500 11l-4 4M4 11v4h4" strokeWidth="1.800" /></StatusIcon>
        <StatusIcon name="自定义"><path d="M1 4h18M1 10h18M1 16h18" strokeWidth="2" /></StatusIcon>
      </div>
    </div>
  );
}

export default function App() {
  return (
    <div className="flex h-screen min-w-[1800px] flex-col overflow-hidden bg-[#383838] font-['Open_Sans','Noto_Sans_CJK_SC',sans-serif] text-[15px] text-white">
      <svg className="absolute h-0 w-0" aria-hidden="true">
        <defs>
          <linearGradient id="metal" x2="0" y2="1"><stop stopColor="#f4f4f4" /><stop offset="1" stopColor="#b9bcc0" /></linearGradient>
          <linearGradient id="tab" x2="0" y2="1"><stop stopColor="#868686" /><stop offset="1" stopColor="#5a5a5a" /></linearGradient>
          <linearGradient id="layoutTab" x2="0" y2="1"><stop stopColor="#606060" /><stop offset="1" stopColor="#969696" /></linearGradient>
        </defs>
      </svg>
      <TitleBar />
      <RibbonTabs />
      <Ribbon />
      <FileTabs />
      <Viewport />
      <footer className="shrink-0 border-t border-[#5a5a5a]">
        <LayoutTabs />
        <StatusBar />
        <div className="flex h-[3px] bg-[#1c3004]"><span className="ml-[250px] w-[61px] bg-[#3c6604]" /></div>
      </footer>
    </div>
  );
}
